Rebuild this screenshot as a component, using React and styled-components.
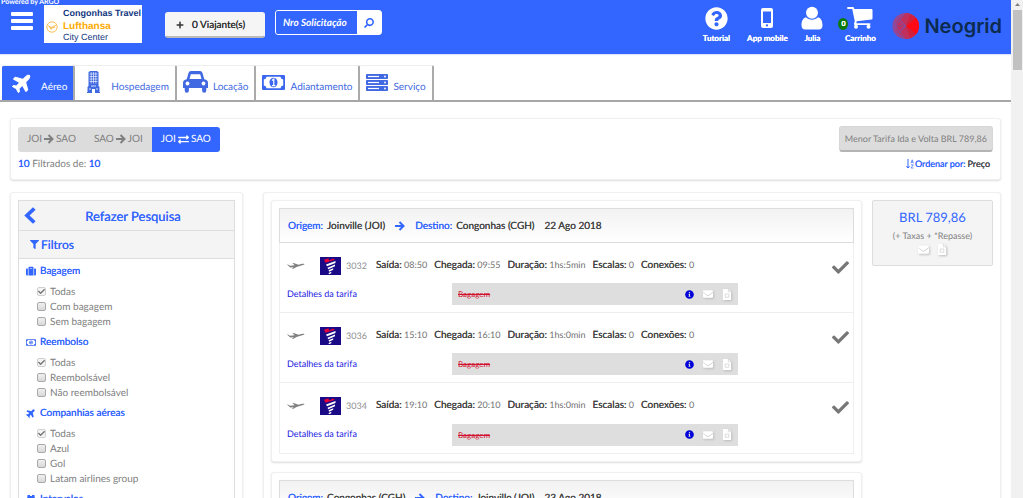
import { createGlobalStyle, css, styled } from "styled-components"
import {
  FaCheck,
  FaEnvelope,
  FaExchangeAlt,
  FaFilter,
  FaInfoCircle,
  FaPlane,
  FaPlus,
  FaQuestionCircle,
  FaSearch,
  FaSuitcase,
} from "react-icons/fa"

const blue = "#3366ff"

const firm = css`
font-weight: 400;
text-shadow: 0 0 0 currentColor;
`

const GlobalStyle = createGlobalStyle`
* {
  box-sizing: border-box;
}
body {
  margin: 0;
  background: #fff;
  color: #808080;
  font-family: Lato, "Liberation Sans", sans-serif;
  font-size: 11px;
  line-height: 16px;
  text-rendering: geometricPrecision;
}
button, input {
  font-family: inherit;
  text-rendering: inherit;
}
a {
  text-decoration: none;
}
svg {
  display: block;
  flex-shrink: 0;
}
`
const Shell = styled.div`
display: flex;
height: 100vh;
overflow: hidden;
`
const Page = styled.div`
flex: 1;
min-width: 0;
overflow: hidden;
`
const ScrollTrack = styled.div`
width: 12px;
background: #f1f1f1;
display: flex;
flex-direction: column;
align-items: center;
gap: 4px;
padding-top: 3px;
color: #808080;
`
const ScrollThumb = styled.div`
width: 9px;
height: 60px;
background: #c1c1c1;
`

// header
const Header = styled.header`
height: 54px;
background: ${blue};
box-shadow: 0 1px 1px #dde4fb;
display: flex;
align-items: flex-start;
padding-right: 9px;
color: #fff;
`
const Brand = styled.div`
width: 44px;
`
const Powered = styled.div`
font-size: 7px;
font-weight: 700;
line-height: 4px;
height: 12px;
padding-left: 1px;
white-space: nowrap;
`
const MenuButton = styled.button`
border: none;
background: none;
padding: 0;
margin-left: 11px;
color: #fff;
`
const Agency = styled.div`
width: 98px;
height: 38px;
margin-top: 5px;
background: #fff;
font-family: "Liberation Sans", Arial, sans-serif;
display: grid;
grid-template-columns: 19px 1fr;
grid-template-rows: 15px 1fr;
color: #12377f;
`
const AgencyName = styled.div`
grid-column: 2;
font-size: 9px;
font-weight: 700;
white-space: nowrap;
`
const AgencyMark = styled.div`
padding: 1px 0 0 2px;
`
const AgencySub = styled.div`
font-size: 9px;
line-height: 10px;
padding-top: 2px;
`
const AgencyTitle = styled.div`
color: #ffab00;
font-size: 10px;
font-weight: 700;
`
const Travelers = styled.button`
display: flex;
align-items: center;
gap: 8px;
width: 100px;
height: 26px;
margin: 12px 0 0 23px;
padding: 0 10px;
border: 1px solid #f5f5f5;
border-bottom: 2px solid #bbb;
border-radius: 3px;
background: #f5f5f5;
color: #333;
font-size: 10px;
${firm}
white-space: nowrap;
`
const SearchBox = styled.form`
display: flex;
width: 107px;
height: 25px;
margin: 10px auto 0 10px;
border: 1px solid #fff;
border-radius: 3px;
`
const SearchInput = styled.input`
flex: 1;
min-width: 0;
border: none;
background: ${blue};
color: #fff;
padding: 0 0 0 7px;
font-size: 10px;
font-style: italic;
font-weight: 700;
border-radius: 3px 0 0 3px;
&::placeholder {
  color: #fff;
  opacity: 1;
}
`
const SearchButton = styled.button`
display: flex;
align-items: center;
justify-content: center;
width: 24px;
border: none;
padding: 0;
background: #fff;
color: ${blue};
svg {
  transform: scaleX(-1);
}
`
const Shortcuts = styled.nav`
display: flex;
margin-top: 6px;
`
const Shortcut = styled.a`
position: relative;
display: flex;
flex-direction: column;
align-items: center;
width: ${props => props.$width};
color: #fff;
font-size: 8px;
font-weight: 700;
white-space: nowrap;
text-shadow: 0 0 0 #fff;
`
const ShortcutIcon = styled.span`
display: flex;
align-items: center;
height: 24px;
`
const CartCount = styled.span`
position: absolute;
left: 9px;
top: 12px;
width: 10px;
height: 12px;
border-radius: 50%;
background: #0b7a0b;
font-size: 7px;
line-height: 12px;
text-align: center;
`
const Neogrid = styled.div`
display: flex;
align-items: center;
gap: 5px;
margin: 12px 0 0 1px;
color: #0c2b4e;
font-family: Inter, Lato, sans-serif;
font-size: 20px;
font-weight: 600;
line-height: 28px;
`

// tabs
const Tabs = styled.nav`
display: flex;
margin-top: 11px;
padding-left: 2px;
border-bottom: 2px solid #a6a6a6;
`
const Tab = styled.a`
display: flex;
align-items: center;
gap: ${props => props.$gap || "5px"};
height: 35px;
padding: 0 6px;
padding-left: ${props => props.$left || "6px"};
border-right: 2px solid #aaa;
border-top: 1px solid #eee;
border-radius: 2px 2px 0 0;
background: ${props => (props.$active ? blue : "#fff")};
color: ${props => (props.$active ? "#fff" : "#4169e1")};
font-size: 10px;
svg {
  margin-bottom: 2px;
}
span {
  padding-top: 8px;
}
`

// summary of the search
const Panel = styled.section`
border: 1px solid #f0f0f0;
border-radius: 3px;
box-shadow: 0 1px 2px #ddd;
padding: 7px;
background: #fff;
`
const Content = styled.main`
display: flex;
flex-direction: column;
gap: 12px;
padding: 16px 10px 0;
`
const Bar = styled.div`
display: flex;
justify-content: space-between;
align-items: center;
`
const Routes = styled.div`
display: flex;
border-radius: 3px;
overflow: hidden;
`
const RouteButton = styled.button`
display: flex;
align-items: center;
justify-content: center;
gap: 2px;
height: 25px;
padding: 0 9px;
border: none;
background: ${props => (props.$active ? blue : "#dcdcdc")};
color: ${props => (props.$active ? "#fff" : "#808080")};
font-size: 10px;
`
const BestFare = styled.button`
height: 26px;
padding: 0 5px;
border: 1px solid #d6d6d6;
border-bottom: 2px solid #b4b4b4;
border-radius: 3px;
background: #dcdcdc;
color: #808080;
font-size: 9px;
`
const Count = styled.div`
font-size: 10px;
strong {
  color: ${blue};
  ${firm}
}
`
const Order = styled.a`
display: flex;
align-items: center;
gap: 1px;
margin-right: 3px;
color: ${blue};
font-size: 9px;
${firm}
span {
  margin-left: 1px;
  color: #444;
}
`
const SummaryFoot = styled(Bar)`
margin-top: 4px;
`

// filters
const Columns = styled.div`
display: grid;
grid-template-columns: 233px 1fr;
gap: 20px;
align-items: start;
`
const Redo = styled.a`
display: flex;
align-items: center;
height: 31px;
padding-left: 5px;
border: 1px solid #ddd;
background: #f4f4f4;
color: ${blue};
font-size: 13px;
${firm}
span {
  flex: 1;
  padding-right: 4px;
  text-align: center;
}
`
const Filters = styled.div`
border: 1px solid #ddd;
border-top: none;
min-height: 320px;
`
const FiltersTitle = styled.h2`
display: flex;
align-items: center;
gap: 2px;
height: 28px;
margin: 0 0 3px;
padding-left: 11px;
border-bottom: 1px solid #ddd;
background: #f4f4f4;
color: ${blue};
font-size: 12px;
${firm}
`
const Group = styled.fieldset`
border: none;
margin: 0 0 4px;
padding: 0 0 0 7px;
min-width: 0;
`
const GroupTitle = styled.legend`
display: flex;
align-items: center;
gap: 4px;
height: 18px;
margin-bottom: 4px;
padding: 0;
color: ${blue};
font-size: 10px;
${firm}
`
const Option = styled.label`
display: flex;
align-items: center;
gap: 4px;
height: 15px;
padding-left: 11px;
font-size: 10px;
`
const Check = styled.input`
appearance: none;
width: 9px;
height: 9px;
margin: 0;
border: 1px solid #a9a9a9;
border-radius: 2px;
background: linear-gradient(#f0f0f0, #d8d8d8);
&:checked {
  border-color: #d0d0d0;
  background: #f4f4f4;
}
`
const CheckBox = styled.span`
position: relative;
display: flex;
`
const CheckMark = styled.span`
position: absolute;
left: 1px;
top: 1px;
color: #777;
`

// results
const Results = styled(Panel)`
display: grid;
grid-template-columns: 1fr 121px;
gap: 10px;
align-items: start;
`
const Flights = styled.div`
display: flex;
flex-direction: column;
gap: 10px;
`
const FlightList = styled.div`
border: 1px solid #f0f0f0;
border-top: none;
`
const Leg = styled.div`
display: flex;
align-items: center;
gap: 10px;
height: 35px;
padding: 0 8px;
border: 1px solid #ddd;
background: linear-gradient(#f2f2f2, #fff);
color: #444;
font-size: 10px;
${firm}
strong {
  color: ${blue};
  ${firm}
  margin-right: 4px;
}
svg {
  color: ${blue};
}
`
const Flight = styled.div`
display: grid;
grid-template-columns: 165px 1fr 108px;
align-items: center;
padding: 11px 7px 7px;
height: 70px;
border-bottom: 1px solid #eee;
&:last-child {
  border-bottom: none;
}
`
const FlightTop = styled.div`
grid-column: 1 / 3;
display: flex;
align-items: center;
gap: 7px;
height: 22px;
white-space: nowrap;
`
const Carrier = styled.div`
display: flex;
align-items: center;
width: 82px;
padding-top: 2px;
font-size: 9px;
color: #909090;
`
const CarrierLogo = styled.span`
margin: 0 5px 0 15px;
`
const Fact = styled.span`
font-size: 9px;
color: #707070;
strong {
  font-size: 10px;
  color: #444;
  ${firm}
}
`
const Chosen = styled.span`
justify-self: end;
margin-right: -3px;
padding-top: 4px;
color: #777;
`
const Details = styled.a`
padding-top: 6px;
color: #1a1adf;
font-size: 9px;
`
const Baggage = styled.div`
display: flex;
align-items: center;
gap: 9px;
height: 22px;
margin-top: 7px;
padding: 0 6px;
background: #dedede;
color: #fff;
s {
  flex: 1;
  color: #d2122e;
  font-size: 8px;
}
`
const Price = styled.aside`
display: flex;
flex-direction: column;
align-items: center;
height: 66px;
padding-top: 8px;
border: 1px solid #ddd;
border-radius: 2px;
background: #f4f4f4;
font-size: 9px;
`
const Amount = styled.div`
color: ${blue};
font-size: 13px;
`
const Note = styled.div`
margin-top: 3px;
`
const PriceIcons = styled.div`
display: flex;
gap: 8px;
color: #fff;
`
const Soft = styled.span`
filter: drop-shadow(1px 1px 1px #bbb);
`

const BarsIcon = () => (
  <svg width="22" height="19" viewBox="0 0 22 19" fill="currentColor">
    <rect width="22" height="4" rx="1" />
    <rect y="7" width="22" height="4" rx="1" />
    <rect y="14" width="22" height="4" rx="1" />
  </svg>
)

const CraneMark = () => (
  <svg width="12" height="12" viewBox="0 0 12 12" fill="none" stroke="#f9ae2b" strokeWidth="0.8">
    <circle cx="6" cy="6" r="5.2" />
    <path d="M2 4.5 5 6.5 10 4.2M3 6l2.5 1.2L9 6.2M4 7.5l2 .6" />
  </svg>
)

const PhoneIcon = () => (
  <svg width="12" height="20" viewBox="0 0 12 20">
    <rect width="12" height="20" rx="2" fill="#fff" />
    <rect x="2" y="3.5" width="8" height="11.5" fill={blue} />
    <circle cx="6" cy="17.4" r="1.1" fill={blue} />
  </svg>
)

const UserIcon = () => (
  <svg width="22" height="24" viewBox="0 0 22 24" fill="#fff">
    <circle cx="11" cy="6.8" r="6" />
    <path d="M5 11.2C1.800 12 .4 15.400.5 19.500.5 22 2 23.500 4 23.500H18c2 0 3.500-1.500 3.500-4 0-4.100-1.300-7.500-4.500-8.300-1.500 1.600-3.600 2.500-6 2.500s-4.500-.9-6-2.500z" />
  </svg>
)

const CartIcon = () => (
  <svg width="26" height="22" viewBox="0 0 26 22" fill="#fff">
    <path d="M1 0h5.500l.9 2H24.500q1 0 1 1v8.500q0 .9-1 1L9.700 14.300l-.3 1.900H22.500q1 0 1 .9t-1 .9H8q-1.300 0-1-1.300l.8-2.500L5.200 2H1Q0 2 0 1t1-1z" />
    <circle cx="9" cy="19.700" r="2" />
    <circle cx="21.500" cy="19.700" r="2" />
  </svg>
)

const NeogridMark = () => (
  <svg width="27" height="28" viewBox="0 0 27 28">
    <circle cx="13.500" cy="14" r="13" fill="#9a4590" />
    <path d="M13 1a13 13 0 0 1 11 5L14 14l10 8.500A13 13 0 0 1 13 27L6 21 4 14l2-7z" fill="#c0305c" />
    <path d="M13 1 5 8l8 6-8 7 8 6M1 14h13M5 5l9 9-9 9M1 10l12 17M1 18 13 1" fill="none" stroke="#7c4fae" strokeWidth="0.7" />
    <path d="M24 5.500 14 14l10 8.500a13 13 0 0 0 0-17z" fill="#ff0a14" />
    <path d="M14 14 18 2.500 24 5.500zM14 14l4 11.500 6-3z" fill="#d0203c" />
  </svg>
)

const BuildingIcon = () => (
  <svg width="13" height="22" viewBox="0 0 13 22">
    <path d="M1.500 1.200 3 0h7l1.500 1.200V15l1 1v5H13v1H8v-4H5v4H0v-1h.5v-5l1-1z" fill="#4169e1" />
    <path d="M2.500 3h8M2.500 5.500h8M2.500 8h8M2.500 10.500h8M4.200 1v11.500M6.500 1v11.500M8.800 1v11.500" stroke="#fff" strokeWidth="0.6" />
    <path d="M2 18h2M9 18h2M4 15h5" stroke="#fff" strokeWidth="0.8" />
  </svg>
)

const CarIcon = () => (
  <svg width="25" height="22" viewBox="0 0 25 22">
    <path d="M5.500 2Q6 0 8 0h9q2 0 2.500 2l1.800 6.300Q25 9 25 12v5h-1.700v2.500q0 2.200-2.100 2.200t-2.100-2.200V17H5.900v2.500q0 2.200-2.100 2.200t-2.100-2.200V17H0v-5Q0 9 3.700 8.300z" fill="#4169e1" />
    <path d="M7.800 3.200h9.400L18.500 8h-12z" fill="#fff" />
    <circle cx="4.500" cy="12.500" r="1.900" fill="#fff" />
    <circle cx="20.500" cy="12.500" r="1.900" fill="#fff" />
  </svg>
)

const MoneyIcon = ({ width = 23, height = 15 }) => (
  <svg width={width} height={height} viewBox="0 0 23 15">
    <rect width="23" height="15" rx="1" fill="#3b67f0" />
    <path d="M4.500 1.800h14a3 3 0 0 0 2.700 2.700v6a3 3 0 0 0-2.700 2.700h-14a3 3 0 0 0-2.700-2.700v-6a3 3 0 0 0 2.700-2.700z" fill="#fff" />
    <ellipse cx="11.500" cy="7.500" rx="4" ry="4.800" fill="#3b67f0" />
    <path d="M10 5.500 11.800 4v6.500M10 10.600h3.300" fill="none" stroke="#fff" strokeWidth="1.200" />
  </svg>
)

const ServerIcon = () => (
  <svg width="22" height="17" viewBox="0 0 22 17">
    {[0, 6, 12].map((y) => (
      <g key={y}>
        <rect y={y} width="22" height="5" rx="0.8" fill="#4169e1" />
        <path d={`M2 ${y + 2.5}h11`} stroke="#fff" strokeWidth="1.200" />
        <circle cx="19" cy={y + 2.5} r="0.9" fill="#fff" />
      </g>
    ))}
  </svg>
)

const ArrowIcon = () => (
  <svg width="10" height="10" viewBox="0 0 10 10" fill="none" stroke="currentColor" strokeWidth="2">
    <path d="M0 5h8.500M4.500 1l4 4-4 4" />
  </svg>
)

const BackIcon = () => (
  <svg width="12" height="17" viewBox="0 0 12 17" fill="none" stroke="currentColor" strokeWidth="3.800">
    <path d="M10.300 1.500 3 8.500l7.300 7" />
  </svg>
)

const SortIcon = () => (
  <svg width="8" height="10" viewBox="0 0 8 10" fill="none" stroke={blue}>
    <path d="M2 0v9M.3 7.200 2 9l1.700-1.800" />
    <path d="M5 4.200 6.200.8l1.200 3.400M5.400 3.200h1.600M5 5.800h2.300L5 9h2.500" strokeWidth="0.7" />
  </svg>
)

const BinocularsIcon = () => (
  <svg width="10" height="9" viewBox="0 0 10 9" fill="currentColor">
    <path d="M1.500 0H4v1h2V0h2.500v1.500L10 6v3H6V5H4v4H0V6l1.500-4.500z" />
  </svg>
)

const TakeoffIcon = () => (
  <svg width="18" height="8" viewBox="0 0 18 8" fill="#808080">
    <path d="M0 2.600l.9-.2 2.200 1.400 4.600-.5L5.500 1.200l1-.2 5 1.700 3.700-.9q2-.3 2.300.1.200.6-1.500 1.100L9.500 4.900 6 7l-1 .1 1.600-1.900-3.400.2z" />
  </svg>
)

const TamLogo = () => (
  <svg width="21" height="18" viewBox="0 0 21 18">
    <rect width="21" height="18" fill="#1b0a85" />
    <path d="M4 2.800 8.500 1.300 9 3.500 13 1.500l2 1.300-9.500 3z" fill="#e4003a" />
    <path d="M6 7.500 15.500 4v2L7 9.200zM7.500 10.700 15 7.500v1.800l-6.800 3zM8.500 13.300l4.700-2v1.500L9.300 14.800zM8.500 16l2.800-1.200v1.500L9 17.300z" fill="#fff" />
  </svg>
)

const FileIcon = () => (
  <svg width="10" height="11" viewBox="0 0 11 12">
    <path d="M1 0h6l3 3v9H1z" fill="#fff" />
    <path d="M7 0v3h3M3.500 5.500h4v3.500h-4z" fill="none" stroke="#cfcfcf" strokeWidth="0.8" />
  </svg>
)

const PlaneGlyph = styled(FaPlane)`
transform: rotate(-45deg);
`

const groups = [
  { title: "Bagagem", icon: <FaSuitcase size={10} />, options: ["Todas", "Com bagagem", "Sem bagagem"] },
  { title: "Reembolso", icon: <MoneyIcon width={10} height={7} />, options: ["Todas", "Reembolsável", "Não reembolsável"] },
  { title: "Companhias aéreas", icon: <PlaneGlyph size={10} />, options: ["Todas", "Azul", "Gol", "Latam airlines group"] },
  { title: "Intervalos", icon: <BinocularsIcon />, options: [] },
]

const flights = [
  { number: "3032", out: "08:50", arrive: "09:55", time: "1hs:5min" },
  { number: "3036", out: "15:10", arrive: "16:10", time: "1hs:0min" },
  { number: "3034", out: "19:10", arrive: "20:10", time: "1hs:0min" },
]

const LegHeader = ({ from, to, date }) => (
  <Leg>
    <span><strong>Origem:</strong>{from}</span>
    <ArrowIcon />
    <span><strong>Destino:</strong>{to}</span>
    <span>{date}</span>
  </Leg>
)

const FlightRow = ({ flight }) => (
  <Flight>
    <FlightTop>
      <Carrier>
        <TakeoffIcon />
        <CarrierLogo><TamLogo /></CarrierLogo>
        {flight.number}
      </Carrier>
      <Fact><strong>Saída:</strong> {flight.out}</Fact>
      <Fact><strong>Chegada:</strong> {flight.arrive}</Fact>
      <Fact><strong>Duração:</strong> {flight.time}</Fact>
      <Fact><strong>Escalas:</strong> 0</Fact>
      <Fact><strong>Conexões:</strong> 0</Fact>
    </FlightTop>
    <Chosen><FaCheck size={17} /></Chosen>
    <Details href="#detalhes">Detalhes da tarifa</Details>
    <Baggage>
      <s>Bagagem</s>
      <FaInfoCircle size={9} color="#0000d8" />
      <Soft><FaEnvelope size={10} /></Soft>
      <Soft><FileIcon /></Soft>
    </Baggage>
  </Flight>
)

const App = () => {
  return (
    <Shell>
      <GlobalStyle />
      <Page>
        <Header>
          <Brand>
            <Powered>Powered by ARGO</Powered>
            <MenuButton aria-label="Menu"><BarsIcon /></MenuButton>
          </Brand>
          <Agency>
            <AgencyName>Congonhas Travel</AgencyName>
            <AgencyMark><CraneMark /></AgencyMark>
            <AgencySub>
              <AgencyTitle>Lufthansa</AgencyTitle>
              City Center
            </AgencySub>
          </Agency>
          <Travelers><FaPlus size={8} /> 0 Viajante(s)</Travelers>
          <SearchBox>
            <SearchInput aria-label="Nro Solicitação" placeholder="Nro Solicitação" />
            <SearchButton type="button" aria-label="Buscar"><FaSearch size={10} /></SearchButton>
          </SearchBox>
          <Shortcuts>
            <Shortcut href="#tutorial" $width="46px">
              <ShortcutIcon><FaQuestionCircle size={23} /></ShortcutIcon>
              Tutorial
            </Shortcut>
            <Shortcut href="#app" $width="56px">
              <ShortcutIcon><PhoneIcon /></ShortcutIcon>
              App mobile
            </Shortcut>
            <Shortcut href="#perfil" $width="34px">
              <ShortcutIcon><UserIcon /></ShortcutIcon>
              Julia
            </Shortcut>
            <Shortcut href="#carrinho" $width="62px">
              <ShortcutIcon><CartIcon /></ShortcutIcon>
              <CartCount>0</CartCount>
              Carrinho
            </Shortcut>
          </Shortcuts>
          <Neogrid><NeogridMark /> Neogrid</Neogrid>
        </Header>
        <Tabs>
          <Tab href="#aereo" $active $left="10px" $gap="8px"><PlaneGlyph size={21} /><span>Aéreo</span></Tab>
          <Tab href="#hospedagem" $left="12px" $gap="11px"><BuildingIcon /><span>Hospedagem</span></Tab>
          <Tab href="#locacao"><CarIcon /><span>Locação</span></Tab>
          <Tab href="#adiantamento"><MoneyIcon /><span>Adiantamento</span></Tab>
          <Tab href="#servico"><ServerIcon /><span>Serviço</span></Tab>
        </Tabs>
        <Content>
          <Panel>
            <Bar>
              <Routes>
                <RouteButton>JOI <ArrowIcon /> SAO</RouteButton>
                <RouteButton>SAO <ArrowIcon /> JOI</RouteButton>
                <RouteButton $active>JOI <FaExchangeAlt size={11} /> SAO</RouteButton>
              </Routes>
              <BestFare>Menor Tarifa Ida e Volta BRL 789,86</BestFare>
            </Bar>
            <SummaryFoot>
              <Count><strong>10</strong> Filtrados de: <strong>10</strong></Count>
              <Order href="#ordenar"><SortIcon /> Ordenar por: <span>Preço</span></Order>
            </SummaryFoot>
          </Panel>
          <Columns>
            <Panel>
              <Redo href="#pesquisa"><BackIcon /><span>Refazer Pesquisa</span></Redo>
              <Filters>
                <FiltersTitle><FaFilter size={9} /> Filtros</FiltersTitle>
                {groups.map((group) => (
                  <Group key={group.title}>
                    <GroupTitle>{group.icon} {group.title}</GroupTitle>
                    {group.options.map((option, i) => (
                      <Option key={option}>
                        <CheckBox>
                          <Check type="checkbox" defaultChecked={i === 0} disabled={i === 0} />
                          {i === 0 && <CheckMark><FaCheck size={7} /></CheckMark>}
                        </CheckBox>
                        {option}
                      </Option>
                    ))}
                  </Group>
                ))}
              </Filters>
            </Panel>
            <Results>
              <Flights>
                <Panel>
                  <LegHeader from="Joinville (JOI)" to="Congonhas (CGH)" date="22 Ago 2018" />
                  <FlightList>
                    {flights.map((flight) => <FlightRow key={flight.number} flight={flight} />)}
                  </FlightList>
                </Panel>
                <Panel>
                  <LegHeader from="Congonhas (CGH)" to="Joinville (JOI)" date="23 Ago 2018" />
                  <FlightList>
                    {flights.map((flight) => <FlightRow key={flight.number} flight={flight} />)}
                  </FlightList>
                </Panel>
              </Flights>
              <Price>
                <Amount>BRL 789,86</Amount>
                <Note>(+ Taxas + *Repasse)</Note>
                <PriceIcons>
                  <Soft><FaEnvelope size={11} /></Soft>
                  <Soft><FileIcon /></Soft>
                </PriceIcons>
              </Price>
            </Results>
          </Columns>
        </Content>
      </Page>
      <ScrollTrack>
        <svg width="5" height="3" viewBox="0 0 5 3" fill="currentColor"><path d="M0 3 2.500 0 5 3z" /></svg>
        <ScrollThumb />
      </ScrollTrack>
    </Shell>
  )
}

export default App
